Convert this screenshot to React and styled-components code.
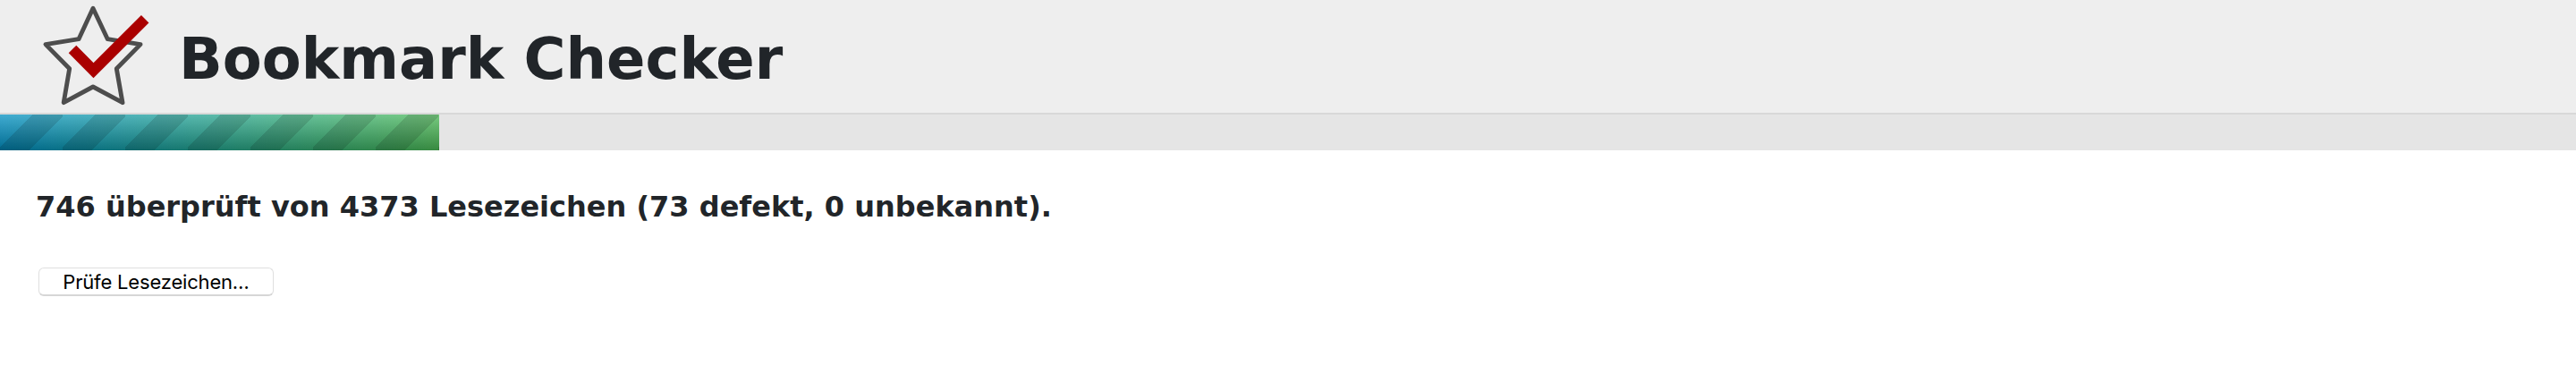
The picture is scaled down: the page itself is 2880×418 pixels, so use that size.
import React from 'react';
import styled, { createGlobalStyle } from 'styled-components';

const GlobalStyle = createGlobalStyle`
  body {
    margin: 0;
    background: #fff;
    color: #212529;
    font-family: Verdana, 'DejaVu Sans', sans-serif;
  }
`;

const Header = styled.header`
  display: flex;
  align-items: center;
  box-sizing: border-box;
  height: 128px;
  padding-left: 40px;
  background: #eee;
  border-bottom: 2px solid #d8d8d8;
`;

const Logo = styled.svg`
  width: 128px;
  height: 126px;
  margin-right: 32px;
`;

const Title = styled.h1`
  margin: 0;
  padding-top: 6px;
  font-size: 64px;
  line-height: 76px;
  font-weight: 700;
  white-space: nowrap;
`;

const Track = styled.div`
  height: 40px;
  background: #e5e5e5;
`;

const Bar = styled.div`
  height: 100%;
  background-image:
    linear-gradient(135deg, transparent 33%, rgba(0, 0, 0, 0.13) 33%, rgba(0, 0, 0, 0.13) 66%, transparent 66%),
    linear-gradient(to bottom, rgba(255, 255, 255, 0.25), rgba(0, 0, 0, 0.25)),
    linear-gradient(to right, #008fc2, #4ab855);
  background-size: 70px 40px, 100% 100%, 100% 100%;
`;

const Content = styled.main`
  display: flex;
  flex-direction: column;
  align-items: flex-start;
  padding: 43px 40px 0;
`;

const Status = styled.h2`
  margin: 0 0 48px;
  font-size: 32px;
  line-height: 40px;
  font-weight: 700;
  white-space: nowrap;
`;

const CheckButton = styled.button`
  box-sizing: border-box;
  width: 263px;
  height: 32px;
  margin-left: 3px;
  padding: 0;
  border: 1px solid #dfdfdf;
  border-bottom: 2px solid #d6d6d6;
  border-radius: 6px;
  background: #fff;
  color: #000;
  font-family: Inter, sans-serif;
  font-size: 22px;
  line-height: 28px;
  letter-spacing: -0.18px;
  white-space: nowrap;
`;

const checked = 746;
const total = 4373;

export default function App() {
  return (
    <>
      <GlobalStyle />
      <Header>
        <Logo viewBox="40 0 128 126" aria-hidden="true">
          <path
            d="M104 9.2 120.3 43.7 157 49.6 130.3 76.7 137 114.7 104 97 71.2 114.7 77.7 76.7 51 49.6 88 43.7Z"
            fill="none"
            stroke="#4d4d4d"
            strokeWidth="4.9"
            strokeLinejoin="round"
          />
          <path d="M81 55 104.5 78.7 162.2 21.2" fill="none" stroke="#a00" strokeWidth="12" />
        </Logo>
        <Title>Bookmark Checker</Title>
      </Header>
      <Track>
        <Bar style={{ width: `${(checked / total) * 100}%` }} />
      </Track>
      <Content>
        <Status>
          {checked} überprüft von {total} Lesezeichen (73 defekt, 0 unbekannt).
        </Status>
        <CheckButton type="button">Prüfe Lesezeichen…</CheckButton>
      </Content>
    </>
  );
}
